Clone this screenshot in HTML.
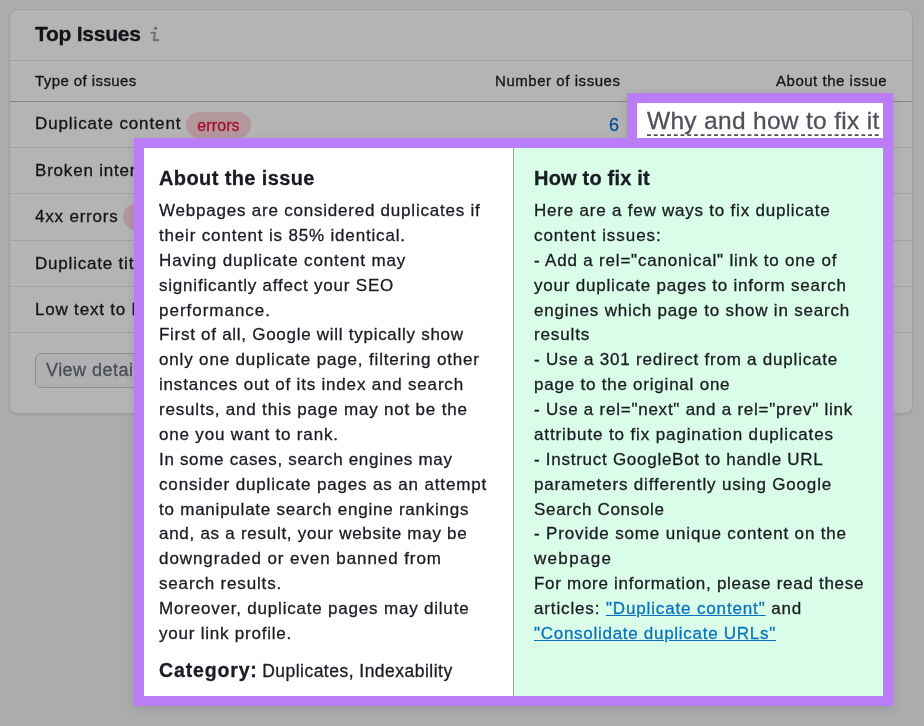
<!DOCTYPE html>
<html><head><meta charset="utf-8">
<style>
*{box-sizing:border-box;margin:0;padding:0}
html,body{width:924px;height:726px;overflow:hidden}
.tx,.h,.a,.tabt,.badge,.btn{will-change:transform;-webkit-text-stroke:0.3px currentColor}
body{background:#abacae;font-family:"Liberation Sans",sans-serif;position:relative;color:#131418}
.a{position:absolute;white-space:nowrap}
.card{position:absolute;left:9px;top:9px;width:904px;height:405px;background:#b4b4b4;border:1px solid #9fa0a5;border-radius:8px;box-shadow:0 1px 2px rgba(0,0,0,0.08)}
.hl{position:absolute;left:10px;width:902px;height:1px;background:#a0a1a6}
.th{font-size:15px;letter-spacing:0.42px;line-height:18px}
.row{font-size:17px;letter-spacing:0.8px;line-height:20px}
.badge{position:absolute;height:26px;border-radius:13px;background:#b4979c;color:#a30f2b;font-size:16px;line-height:27px;text-align:center;letter-spacing:0.1px}
.btn{position:absolute;left:35px;top:353px;width:130px;height:35px;border:1px solid #8f9096;border-radius:6px;background:#afb0b2;color:#4b4d55;font-size:18px;line-height:33px;padding-left:10px;letter-spacing:0.47px}
.pur{position:absolute;background:#ba7cf7}
.tabw{position:absolute;left:637px;top:103px;width:246px;height:35px;background:#fff}
.tabt{position:absolute;left:647px;top:107px;font-size:24.5px;letter-spacing:0.31px;color:#4f525b;line-height:28px;white-space:nowrap}
.dash{position:absolute;left:647px;top:134px;width:231px;height:2px;background:repeating-linear-gradient(90deg,#50535c 0 4px,transparent 4px 6.3px)}
.lw{position:absolute;left:144px;top:148px;width:369px;height:548px;background:#fff}
.div{position:absolute;left:513px;top:148px;width:1px;height:548px;background:#3dd69c}
.rg{position:absolute;left:514px;top:148px;width:369px;height:548px;background:#d9fde9}
.h{position:absolute;font-size:20px;font-weight:bold;letter-spacing:0.2px;color:#1a1c23;line-height:24px;white-space:nowrap}
.tx{position:absolute;font-size:17px;letter-spacing:0.72px;line-height:24.87px;color:#1a1c23;white-space:nowrap}
.lk{color:#0b72bf;text-decoration:underline;text-underline-offset:1px}
</style></head><body>
<div class="card"></div>
<div class="a" style="left:35px;top:22px;font-size:21px;font-weight:bold;line-height:24px;letter-spacing:-0.25px">Top Issues</div>
<svg style="position:absolute;left:140px;top:20px" width="30" height="28" viewBox="0 0 30 28"><circle cx="15.6" cy="8.2" r="1.7" fill="#70727a"/><path d="M11.6 12.8H14.9L13.8 20.1H18.3" fill="none" stroke="#70727a" stroke-width="2.1" stroke-linecap="round" stroke-linejoin="round"/></svg>
<div class="hl" style="top:60px"></div>
<div class="a th" style="left:35px;top:72px">Type of issues</div>
<div class="a th" style="left:495px;top:72px;letter-spacing:0.55px">Number of issues</div>
<div class="a th" style="left:776px;top:72px;letter-spacing:0.52px">About the issue</div>
<div class="hl" style="top:101px;background:#85868c"></div>

<div class="a row" style="left:35px;top:114px;letter-spacing:0.88px">Duplicate content</div>
<div class="badge" style="left:186px;top:112px;width:65px">errors</div>
<div class="a row" style="left:609px;top:115px;color:#0b4c93;font-size:18px">6</div>
<div class="hl" style="top:147px"></div>
<div class="a row" style="left:35px;top:161px">Broken internal links</div>
<div class="hl" style="top:193px"></div>
<div class="a row" style="left:35px;top:207px">4xx errors</div>
<div class="badge" style="left:123px;top:204px;width:65px">errors</div>
<div class="hl" style="top:240px"></div>
<div class="a row" style="left:35px;top:254px">Duplicate title tags</div>
<div class="hl" style="top:286px"></div>
<div class="a row" style="left:35px;top:300px">Low text to HTML ratio</div>
<div class="hl" style="top:332px"></div>
<div class="btn">View details</div>

<!-- popup -->
<div style="position:absolute;left:0;top:0;width:924px;height:726px;filter:drop-shadow(0 3px 5px rgba(0,0,0,0.11))"><div class="pur" style="left:627px;top:93px;width:266px;height:55px"></div>
<div class="pur" style="left:134px;top:138px;width:759px;height:568px"></div></div>
<div class="tabw"></div>
<div class="tabt">Why and how to fix it</div>
<svg style="position:absolute;left:640px;top:130px" width="244" height="10"><line x1="7" y1="5.1" x2="239" y2="5.1" stroke="#4d5059" stroke-width="1.7" stroke-dasharray="3.9 2.8"/></svg>
<div class="lw"></div>
<div class="rg"></div>
<div class="div"></div>

<div class="h" style="left:159px;top:166px;letter-spacing:0.39px">About the issue</div>
<div class="tx" style="left:159px;top:198.6px"><span style="letter-spacing:0.781px">Webpages are considered duplicates if</span><br><span style="letter-spacing:0.830px">their content is 85% identical.</span><br><span style="letter-spacing:0.864px">Having duplicate content may</span><br><span style="letter-spacing:0.784px">significantly affect your SEO</span><br><span style="letter-spacing:0.984px">performance.</span><br><span style="letter-spacing:0.723px">First of all, Google will typically show</span><br><span style="letter-spacing:0.838px">only one duplicate page, filtering other</span><br><span style="letter-spacing:0.809px">instances out of its index and search</span><br><span style="letter-spacing:0.809px">results, and this page may not be the</span><br><span style="letter-spacing:0.820px">one you want to rank.</span><br><span style="letter-spacing:0.679px">In some cases, search engines may</span><br><span style="letter-spacing:0.850px">consider duplicate pages as an attempt</span><br><span style="letter-spacing:0.771px">to manipulate search engine rankings</span><br><span style="letter-spacing:0.726px">and, as a result, your website may be</span><br><span style="letter-spacing:0.923px">downgraded or even banned from</span><br><span style="letter-spacing:0.834px">search results.</span><br><span style="letter-spacing:0.800px">Moreover, duplicate pages may dilute</span><br><span style="letter-spacing:0.779px">your link profile.</span></div>
<div class="a" style="left:159px;top:658px;line-height:24px;color:#1a1c23"><b style="font-size:19.5px;letter-spacing:0.85px">Category:</b> <span style="font-size:17.5px;letter-spacing:0.48px">Duplicates, Indexability</span></div>

<div class="h" style="left:534px;top:166px">How to fix it</div>
<div class="tx" style="left:534px;top:198.6px"><span style="letter-spacing:0.783px">Here are a few ways to fix duplicate</span><br><span style="letter-spacing:0.956px">content issues:</span><br><span style="letter-spacing:0.809px">- Add a rel="canonical" link to one of</span><br><span style="letter-spacing:0.792px">your duplicate pages to inform search</span><br><span style="letter-spacing:0.797px">engines which page to show in search</span><br><span style="letter-spacing:0.870px">results</span><br><span style="letter-spacing:0.784px">- Use a 301 redirect from a duplicate</span><br><span style="letter-spacing:0.777px">page to the original one</span><br><span style="letter-spacing:0.756px">- Use a rel="next" and a rel="prev" link</span><br><span style="letter-spacing:0.879px">attribute to fix pagination duplicates</span><br><span style="letter-spacing:0.732px">- Instruct GoogleBot to handle URL</span><br><span style="letter-spacing:0.829px">parameters differently using Google</span><br><span style="letter-spacing:0.697px">Search Console</span><br><span style="letter-spacing:0.843px">- Provide some unique content on the</span><br><span style="letter-spacing:1.320px">webpage</span><br><span style="letter-spacing:0.712px">For more information, please read these</span><br><span style="letter-spacing:0.857px">articles: <span class="lk">"Duplicate content"</span> and</span><br><span style="letter-spacing:0.716px"><span class="lk">"Consolidate duplicate URLs"</span></span></div>
</body></html>
